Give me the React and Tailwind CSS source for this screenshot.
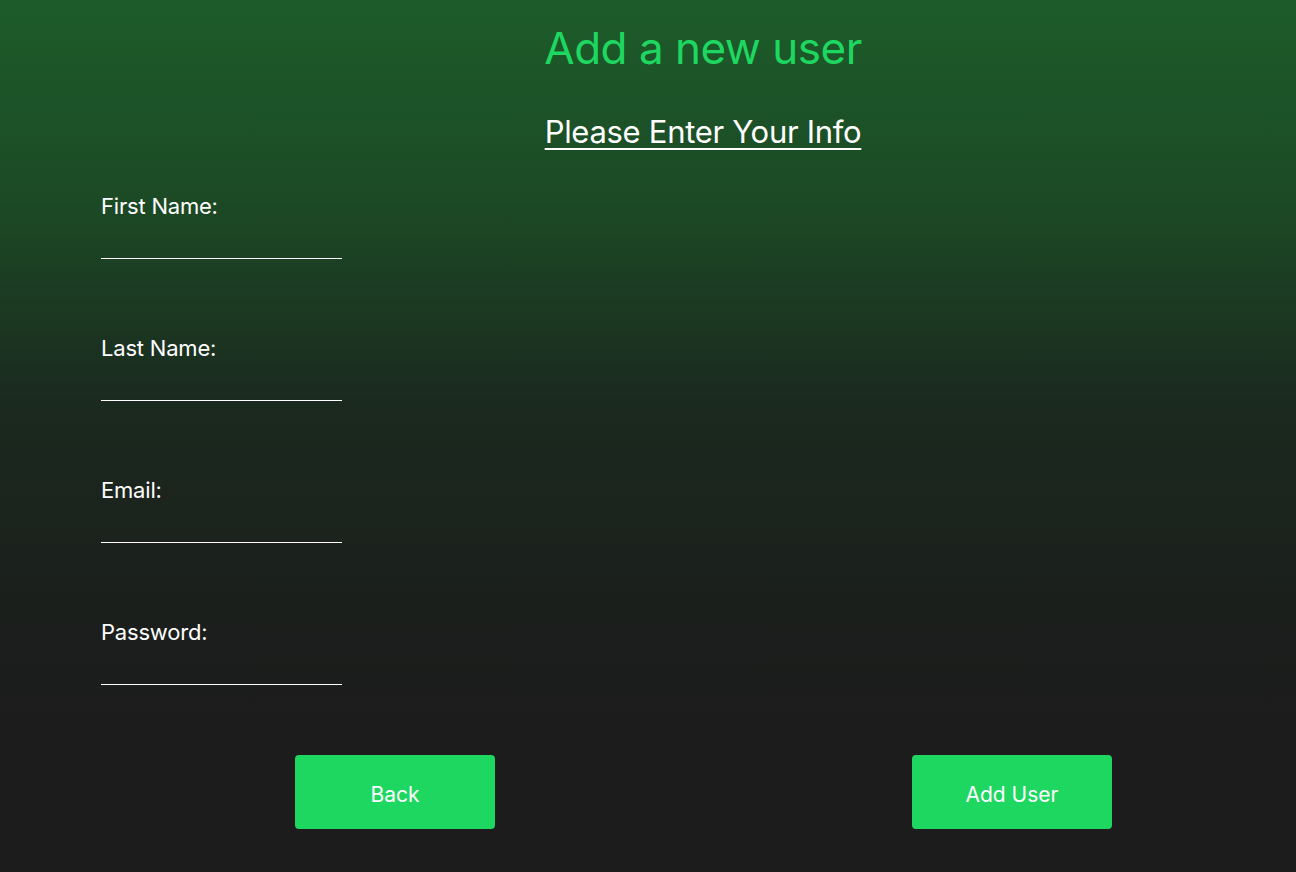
import React, { useState } from 'react';

const fields = [
    { key: 'first', label: 'First Name:', type: 'text' },
    { key: 'last', label: 'Last Name:', type: 'text' },
    { key: 'email', label: 'Email:', type: 'email' },
    { key: 'password', label: 'Password:', type: 'password' },
];

const App = () => {
    const [form, setForm] = useState({ first: '', last: '', email: '', password: '' });

    return (
        <div
            className="min-h-[872px] w-full bg-[linear-gradient(to_bottom,#1d5c2a_0%,#1c4a25_23%,#1b2a1f_46%,#1b1f1c_69%,#1c1c1c_85%)] text-white"
            style={{ fontFamily: 'Inter, "Noto Sans", sans-serif' }}
        >
            <div className="pl-[110px] pt-[19px] text-center">
                <h1 className="text-[44px] leading-[58px] text-[#1ed760] tracking-[-0.5px]">Add a new user</h1>
                <h2 className="mt-[35px] text-[31px] leading-[40px] underline underline-offset-[5px] decoration-2 tracking-[-0.3px]">
                    Please Enter Your Info
                </h2>
            </div>

            <form className="pl-[101px] pt-[40px]" onSubmit={(e) => e.preventDefault()}>
                {fields.map((f) => (
                    <div key={f.key} className="mb-[75px] flex flex-col">
                        <label className="text-[22px] leading-[28px] tracking-[-0.2px]">{f.label}</label>
                        <input
                            type={f.type}
                            value={form[f.key]}
                            onChange={(e) => setForm({ ...form, [f.key]: e.target.value })}
                            className="mt-[10px] h-[29px] w-[241px] border-b border-white bg-transparent text-white outline-none"
                        />
                    </div>
                ))}

                <div className="-mt-[5px] flex pl-[194px] gap-[417px]">
                    <button type="button" className="h-[74px] w-[200px] rounded-[4px] bg-[#1ed760] pt-[5px] text-[21px] text-white">
                        Back
                    </button>
                    <button type="submit" className="h-[74px] w-[200px] rounded-[4px] bg-[#1ed760] pt-[5px] text-[21px] text-white">
                        Add User
                    </button>
                </div>
            </form>
        </div>
    );
};

export default App;
